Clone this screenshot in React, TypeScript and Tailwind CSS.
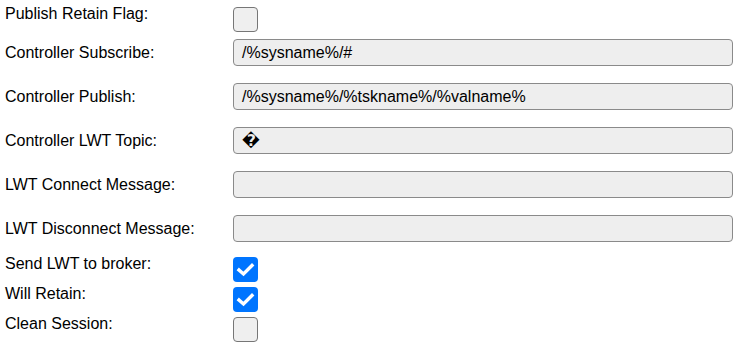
import type { ReactNode } from 'react'

function Box({ checked }: { checked?: boolean }) {
  return (
    <div
      className={
        checked
          ? 'mt-[2px] h-[25px] w-[25px] rounded-[4px] bg-[#0075ff]'
          : 'mt-[2px] h-[25px] w-[25px] rounded-[4px] border border-[#767676] bg-[#efefef]'
      }
    >
      {checked ? (
        <svg viewBox="0 0 25 25" className="h-[25px] w-[25px]" fill="none">
          <path d="M6 13 L10.5 17 L19 8.5" stroke="#fff" strokeWidth="3.4" strokeLinecap="square" />
        </svg>
      ) : null}
    </div>
  )
}

function CheckRow({ label, checked, className }: { label: string; checked?: boolean; className: string }) {
  return (
    <div className={`flex items-start ${className}`}>
      <span className="w-[228px] leading-[18px]">{label}</span>
      <Box checked={checked} />
    </div>
  )
}

function InputRow({ label, value, className }: { label: string; value: ReactNode; className: string }) {
  return (
    <div className={`flex items-center ${className}`}>
      <span className="w-[228px] leading-[18px]">{label}</span>
      <div className="flex h-[27px] w-[500px] items-center rounded-[4px] border border-[#8a8a8a] bg-[#eeeeee] px-2 leading-[18px]">
        {value}
      </div>
    </div>
  )
}

export default function App() {
  return (
    <div className="flex min-h-screen flex-col bg-white pl-[5px] pt-[5px] font-['Liberation_Sans',Arial,sans-serif] text-[16px] text-black">
      <CheckRow label="Publish Retain Flag:" className="" />
      <InputRow label="Controller Subscribe:" value="/%sysname%/#" className="mt-[7px]" />
      <InputRow label="Controller Publish:" value="/%sysname%/%tskname%/%valname%" className="mt-[17px]" />
      <InputRow
        label="Controller LWT Topic:"
        value={<span className="font-['DejaVu_Sans',sans-serif] font-bold">{'\uFFFD'}</span>}
        className="mt-[17px]"
      />
      <InputRow label="LWT Connect Message:" value="" className="mt-[17px]" />
      <InputRow label="LWT Disconnect Message:" value="" className="mt-[17px]" />
      <CheckRow label="Send LWT to broker:" checked className="mt-[13px]" />
      <CheckRow label="Will Retain:" checked className="mt-[3px]" />
      <CheckRow label="Clean Session:" className="mt-[3px]" />
    </div>
  )
}
